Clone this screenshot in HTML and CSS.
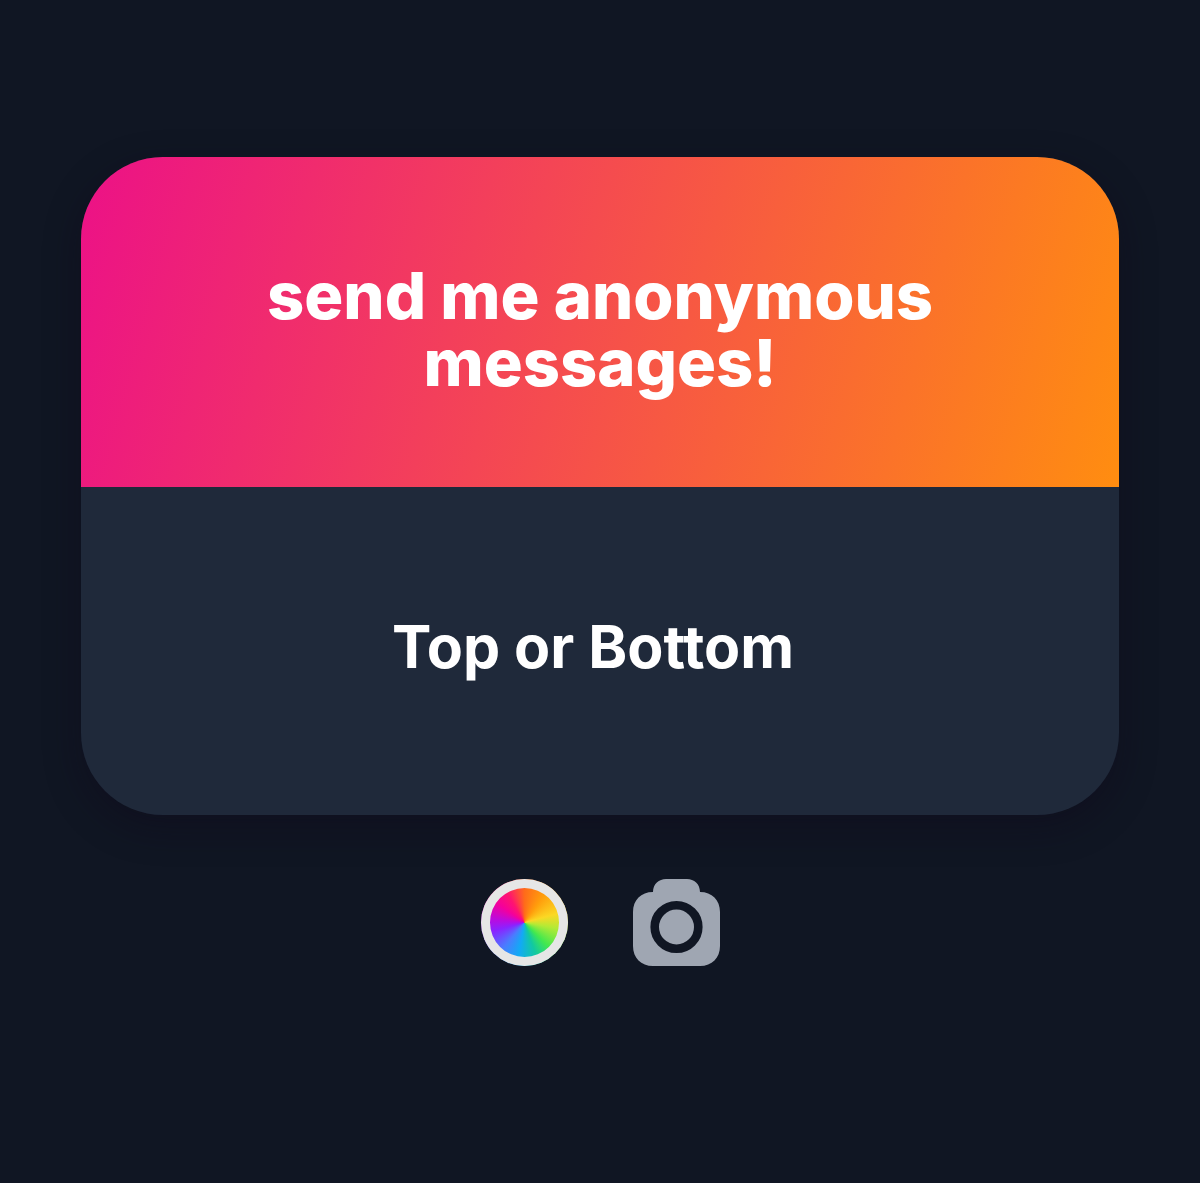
FILE: index.html
```
<!DOCTYPE html>
<html lang="en">
<head>
<meta charset="utf-8">
<meta name="viewport" content="width=device-width, initial-scale=1">
<title>send me anonymous messages!</title>
<link rel="stylesheet" href="styles.css">
</head>
<body>
<main class="page">
  <article class="card">
    <header class="card-header">
      <h1 class="prompt">send me anonymous messages!</h1>
    </header>
    <div class="card-body">
      <p class="message">Top or Bottom&nbsp;</p>
    </div>
  </article>
  <div class="actions">
    <button class="action color-wheel" type="button" aria-label="Change color"></button>
    <button class="action" type="button" aria-label="Take photo">
      <svg class="camera" viewBox="0 0 87 87" aria-hidden="true">
        <path fill="#9fa6b2" d="M20 13C20 5 26 0 33 0H54C61 0 67 5 67 13C79 13 87 21 87 33V67C87 79 79 87 67 87H20C8 87 0 79 0 67V33C0 21 8 13 20 13Z"/>
        <circle cx="43.5" cy="48" r="21.8" fill="#9fa6b2" stroke="#101623" stroke-width="8.6"/>
      </svg>
    </button>
  </div>
</main>
</body>
</html>
```
FILE: styles.css
```
* {
  box-sizing: border-box;
}

body {
  margin: 0;
  background: #101623;
  color: #fff;
  font-family: Inter, "Liberation Sans", sans-serif;
}

.page {
  min-height: 100vh;
  padding: 157px 81px 64px;
}

.card {
  border-radius: 82px;
  overflow: hidden;
  background: #1f293a;
  box-shadow: 0 12px 36px rgba(14, 8, 24, 0.4);
}

.card-header {
  padding: 105px 160px 91px;
  background: linear-gradient(105deg, #ec1187, #ff8d10);
}

.prompt {
  margin: 0;
  font-size: 65px;
  font-weight: 800;
  line-height: 67px;
  text-align: center;
}

.card-body {
  padding: 120px 80px 128px;
}

.message {
  margin: 0;
  font-size: 59px;
  font-weight: 700;
  line-height: 80px;
  text-align: center;
}

.actions {
  display: flex;
  justify-content: center;
  gap: 65px;
  margin-top: 64px;
}

.action {
  width: 87px;
  height: 87px;
  padding: 0;
  border: 0;
  background: none;
  cursor: pointer;
}

.color-wheel {
  padding: 9px;
  border-radius: 50%;
  background:
    conic-gradient(#ff6b1a, #ff9d0c 35deg, #fbd824 75deg, #b4ea35 100deg, #42e84f 135deg, #12c9a0 160deg, #12aaf5 190deg, #4a7cff 220deg, #8b22ff 255deg, #b80ce0 275deg, #f4009c 305deg, #ff1470 330deg, #ff6b1a);
  box-shadow: inset 0 0 0 9px #e6e6e6;
}

.camera {
  display: block;
  width: 100%;
  height: 100%;
}
```
